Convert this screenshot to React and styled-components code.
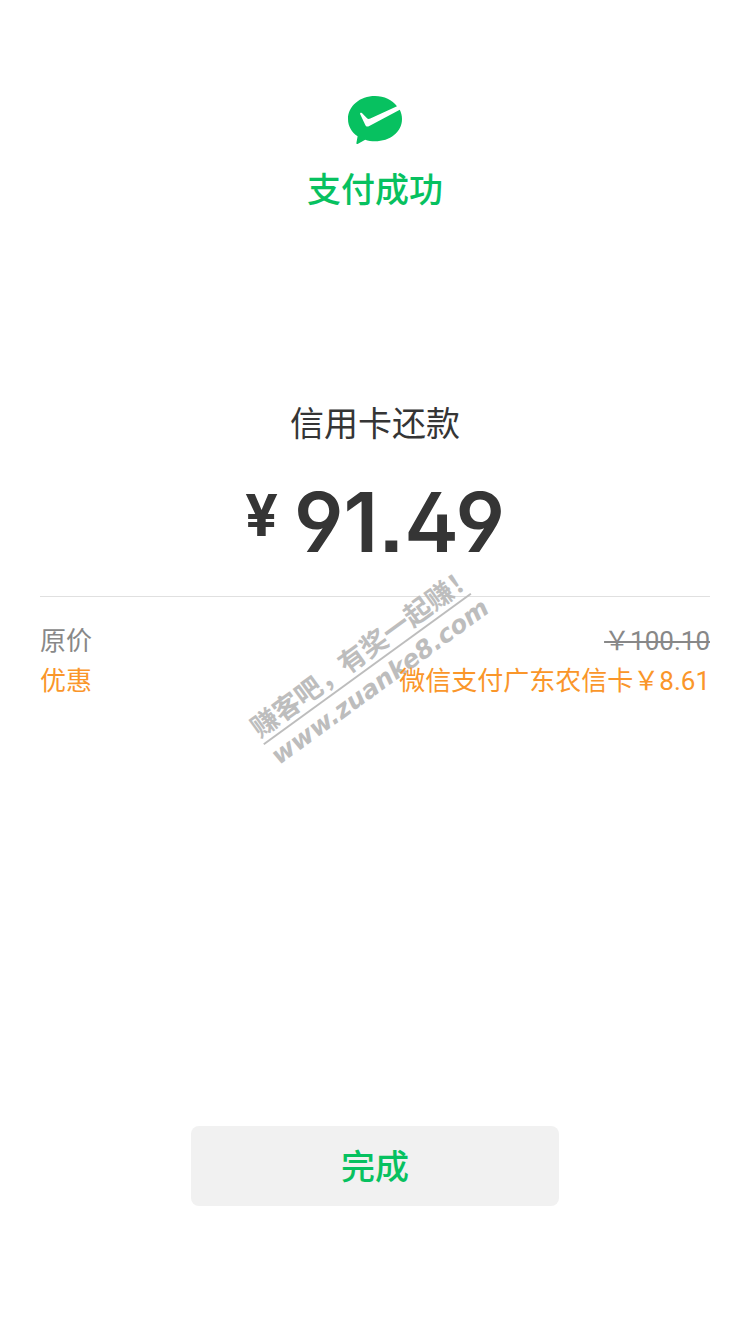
import React from "react";
import styled, { createGlobalStyle } from "styled-components";

const GlobalStyle = createGlobalStyle`
  * {
    box-sizing: border-box;
  }
  body {
    margin: 0;
    background-color: #ffffff;
    font-family: Roboto, "Noto Sans CJK SC", sans-serif;
  }
`;

const Page = styled.main`
  display: flex;
  flex-direction: column;
  align-items: center;
  min-height: 100vh;
  padding: 94px 40px 128px;
`;

const Status = styled.header`
  display: flex;
  flex-direction: column;
  align-items: center;
  gap: 20px;
  color: #07c160;
`;

const StatusIcon = styled.svg`
  display: block;
  width: 56px;
  height: 52px;
`;

const StatusText = styled.h1`
  margin: 0;
  font-size: 34px;
  font-weight: 500;
  line-height: 48px;
`;

const Bill = styled.section`
  display: flex;
  flex-direction: column;
  align-items: center;
  margin-top: 186px;
  color: #353535;
`;

const Merchant = styled.h2`
  margin: 0;
  font-size: 34px;
  font-weight: 400;
  line-height: 48px;
`;

const Amount = styled.p`
  display: flex;
  align-items: flex-start;
  gap: 16px;
  margin: 28px 0 0;
  font-family: Inter, sans-serif;
  font-size: 82px;
  font-feature-settings: "ss01", "ss07";
  font-weight: 600;
  line-height: 94px;
`;

const Currency = styled.span`
  font-size: 58px;
  font-weight: 700;
  line-height: 78px;
`;

const Details = styled.dl`
  position: relative;
  width: 100%;
  margin: 26px 0 0;
  padding-top: 24px;
  border-top: 1px solid #e0e0e0;
`;

const DetailRow = styled.div`
  display: flex;
  justify-content: space-between;
  font-size: 26px;
  line-height: 40px;
  color: ${(props) => props.$color};
`;

const DetailLabel = styled.dt``;

const DetailValue = styled.dd`
  position: relative;
  z-index: 1;
  margin: 0;
  text-decoration: ${(props) => (props.$struck ? "line-through" : "none")};
`;

const Watermark = styled.div`
  position: absolute;
  top: 72px;
  left: 50%;
  width: 256px;
  color: #bdbdbd;
  font-weight: 700;
  white-space: nowrap;
  transform: translate(-53%, -50%) rotate(-36deg);
  pointer-events: none;
`;

const WatermarkSlogan = styled.div`
  border-bottom: 2px solid #bdbdbd;
  font-family: "Noto Sans CJK SC", sans-serif;
  font-size: 27px;
  line-height: 34px;
`;

const WatermarkSite = styled.div`
  font-family: "DejaVu Sans", sans-serif;
  font-size: 25px;
  font-style: italic;
  line-height: 34px;
`;

const DoneButton = styled.button`
  width: 55%;
  height: 80px;
  margin-top: auto;
  padding: 0 0 4px;
  border: 0;
  border-radius: 8px;
  background-color: #f1f1f1;
  color: #07c160;
  font-family: inherit;
  font-size: 34px;
  font-weight: 500;
  cursor: pointer;
`;

function App() {
  return (
    <>
      <GlobalStyle />
      <Page>
        <Status>
          <StatusIcon viewBox="0 0 56 52" aria-hidden="true">
            <path
              fill="currentColor"
              d="M28 2C13 2 1 12 1 25c0 7.200 3.700 13.300 9.600 17.300L9.400 49c-.2 1 .4 1.300 1.200.9l7.600-4.200c3 1 6.300 1.600 9.800 1.600 15 0 27-9.300 27-22.300 0-3.300-.8-6.400-2.200-9.200L22.300 31.900c-2 1.100-3.100.8-4-.9L13.200 20.300c-.5-1.300.5-2 1.700-1.200l4.900 5c1 1 2 1.200 3.500.5L50 12.200C45.200 6 37.200 2 28 2z"
            />
          </StatusIcon>
          <StatusText>支付成功</StatusText>
        </Status>

        <Bill>
          <Merchant>信用卡还款</Merchant>
          <Amount>
            <Currency>¥</Currency>
            <span>91.49</span>
          </Amount>
        </Bill>

        <Details>
          <DetailRow $color="#888888">
            <DetailLabel>原价</DetailLabel>
            <DetailValue $struck>￥100.10</DetailValue>
          </DetailRow>
          <DetailRow $color="#fa962a">
            <DetailLabel>优惠</DetailLabel>
            <DetailValue>微信支付广东农信卡￥8.61</DetailValue>
          </DetailRow>
          <Watermark aria-hidden="true">
            <WatermarkSlogan>赚客吧，有奖一起赚！</WatermarkSlogan>
            <WatermarkSite>www.zuanke8.com</WatermarkSite>
          </Watermark>
        </Details>

        <DoneButton type="button">完成</DoneButton>
      </Page>
    </>
  );
}

export default App;
